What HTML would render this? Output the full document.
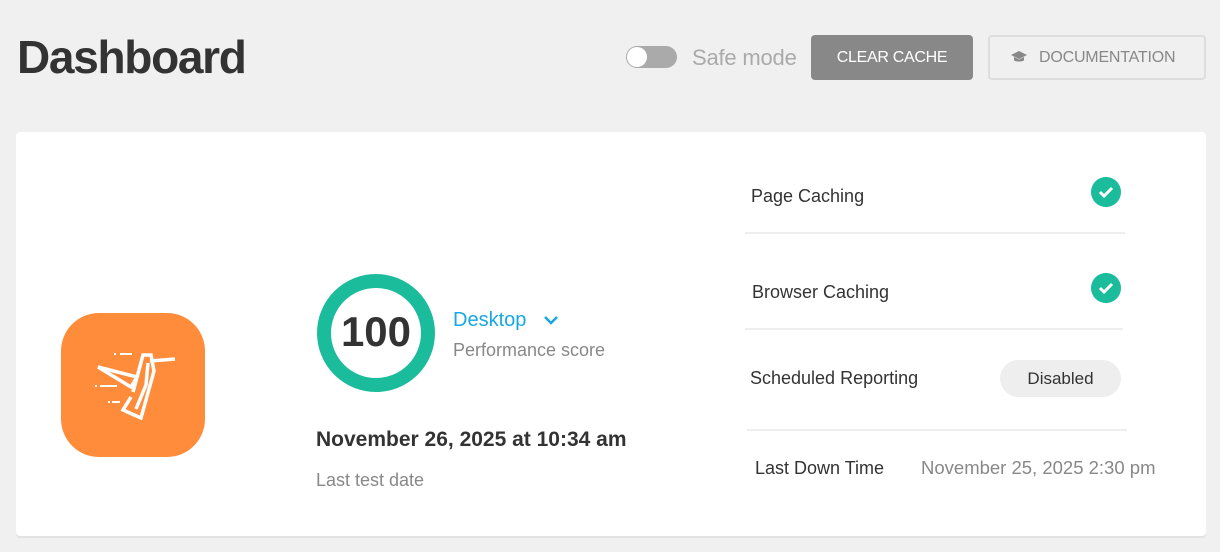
<!DOCTYPE html>
<html><head><meta charset="utf-8"><style>
*{margin:0;padding:0;box-sizing:border-box}
body{width:1220px;height:552px;background:#f0f0f0;font-family:"Liberation Sans",sans-serif;position:relative;overflow:hidden;color:#333}
.a{position:absolute}
h1{position:absolute;left:17px;top:30px;font-size:46px;font-weight:bold;color:#333;letter-spacing:-1.3px}
.card{position:absolute;left:16px;top:132px;width:1190px;height:404px;background:#fff;border-radius:4px;box-shadow:0 2px 0 #e2e2e2}
.sep{position:absolute;height:2px;background:#eee}
.chk{position:absolute;width:30px;height:30px;border-radius:50%;background:#1abc9c}
</style></head><body>
<h1>Dashboard</h1>
<div class="a" style="left:626px;top:46px;width:51px;height:22px;border-radius:11px;background:#aaa"></div>
<div class="a" style="left:627px;top:47px;width:20px;height:20px;border-radius:50%;background:#fff"></div>
<div class="a" style="left:692px;top:45px;font-size:22px;color:#aaa;letter-spacing:-0.2px">Safe mode</div>
<div class="a" style="left:811px;top:35px;width:162px;height:45px;background:#888;border-radius:4px;color:#fff;font-size:16px;text-align:center;line-height:45px;letter-spacing:-0.3px">CLEAR CACHE</div>
<div class="a" style="left:988px;top:35px;width:218px;height:45px;border:2px solid #ddd;border-radius:4px;color:#888;font-size:16px;line-height:41px;padding-left:49px;letter-spacing:-0.2px">DOCUMENTATION</div>
<svg class="a" style="left:1010px;top:50px" width="18" height="14" viewBox="0 0 18 14"><path d="M9 1L1 5l8 4 8-4z M4 7v3c0 2 10 2 10 0V7l-5 2.5z" fill="#888"/></svg>
<div class="card"></div>
<div class="a" style="left:61px;top:313px;width:144px;height:144px;border-radius:38px;background:#ff8c3a"></div>
<svg class="a" style="left:61px;top:313px" width="144" height="144" viewBox="0 0 144 144">
<g fill="none" stroke="#fff" stroke-width="3.5" stroke-linejoin="miter">
<path d="M37 54L76 64L70 74Z"/>
<path d="M72 79L82 42L90 42L93 58L80 105L62 97L70 84"/>
<path d="M89 48L114 46"/>
<path d="M87 50L85 72L75 96"/>
</g>
<path d="M53 41h2M59 41h12M34 73h2M39 73h17M47 89h2M51 89h8" stroke="#fff" stroke-width="2"/>
</svg>
<svg class="a" style="left:316px;top:273px" width="120" height="120"><circle cx="60" cy="60" r="52" fill="none" stroke="#1abc9c" stroke-width="14"/></svg>
<div class="a" style="left:316px;top:308px;width:120px;text-align:center;font-size:42px;font-weight:bold;color:#333">100</div>
<div class="a" style="left:453px;top:309px;font-size:20px;color:#17a8e3">Desktop</div>
<svg class="a" style="left:543px;top:314px" width="16" height="12"><path d="M2 3l6 6 6-6" fill="none" stroke="#17a8e3" stroke-width="2.5"/></svg>
<div class="a" style="left:453px;top:340px;font-size:18px;color:#888">Performance score</div>
<div class="a" style="left:316px;top:428px;font-size:21px;font-weight:bold;color:#333">November 26, 2025 at 10:34 am</div>
<div class="a" style="left:316px;top:470px;font-size:18px;color:#888">Last test date</div>
<div class="a" style="left:751px;top:186px;font-size:18px">Page Caching</div>
<div class="chk" style="left:1091px;top:177px"></div>
<svg class="a" style="left:1091px;top:177px" width="30" height="30"><path d="M9 15l4 4 8-8" fill="none" stroke="#fff" stroke-width="3"/></svg>
<div class="sep" style="left:745px;top:232px;width:380px"></div>
<div class="a" style="left:752px;top:282px;font-size:18px">Browser Caching</div>
<div class="chk" style="left:1091px;top:273px"></div>
<svg class="a" style="left:1091px;top:273px" width="30" height="30"><path d="M9 15l4 4 8-8" fill="none" stroke="#fff" stroke-width="3"/></svg>
<div class="sep" style="left:745px;top:328px;width:378px"></div>
<div class="a" style="left:750px;top:368px;font-size:18px">Scheduled Reporting</div>
<div class="a" style="left:1000px;top:360px;width:121px;height:37px;border-radius:19px;background:#eee;font-size:17px;text-align:center;line-height:37px">Disabled</div>
<div class="sep" style="left:747px;top:429px;width:380px"></div>
<div class="a" style="left:755px;top:458px;font-size:18px">Last Down Time</div>
<div class="a" style="left:921px;top:457px;font-size:18.5px;color:#888">November 25, 2025 2:30 pm</div>
</body></html>
